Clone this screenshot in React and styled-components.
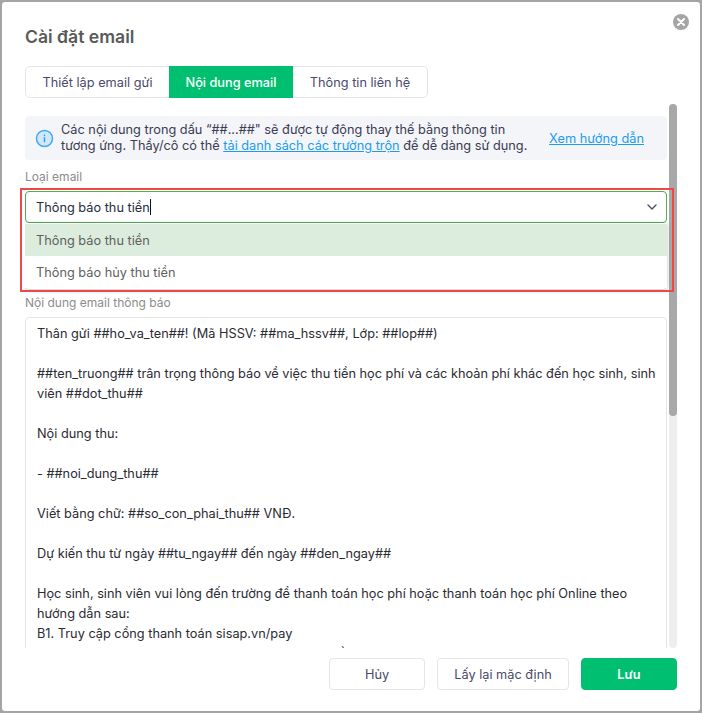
import React from "react";
import styled, { createGlobalStyle } from "styled-components";
import { ChevronDown } from "lucide-react";

const Global = createGlobalStyle`
  html, body { margin: 0; padding: 0; height: 100%; background: #a5a5a5; }
  #root { height: 100%; }
  * { box-sizing: border-box; }
`;

const Page = styled.div`
  height: 713px;
  padding: 2px;
  font-family: Inter, "Noto Sans", sans-serif;
  font-size: 12.75px;
`;

const Modal = styled.div`
  position: relative;
  height: 709px;
  background: #fff;
  border-radius: 3px;
  display: flex;
  flex-direction: column;
  padding: 23px 23px 21px 23px;
  overflow: hidden;
`;

const CloseButton = styled.button`
  position: absolute;
  top: 12px;
  right: 11px;
  width: 16px;
  height: 16px;
  padding: 0;
  border: 0;
  background: none;
  display: block;
`;

const Title = styled.h2`
  margin: 0;
  font-size: 17.6px;
  line-height: 24px;
  font-weight: 600;
  color: #595959;
`;

const Tabs = styled.div`
  display: flex;
  align-self: flex-start;
  height: 32px;
  margin-top: 17px;
  border: 1px solid #e5e5e8;
  border-radius: 5px;
`;

const Tab = styled.div`
  display: flex;
  align-items: center;
  justify-content: center;
  width: ${(p) => p.$w}px;
  margin: ${(p) => (p.$active ? "-1px 0" : "0")};
  background: ${(p) => (p.$active ? "#00bf71" : "transparent")};
  color: ${(p) => (p.$active ? "#fff" : "#4a4a68")};
  font-weight: ${(p) => (p.$active ? 500 : 400)};
`;

const ScrollArea = styled.div`
  position: relative;
  flex: 1;
  min-height: 0;
  margin-top: 6px;
  padding-right: 10px;
  overflow: hidden;
`;

const Track = styled.div`
  position: absolute;
  top: 0;
  right: 0;
  bottom: 0;
  width: 8px;
  background: #eeeeee;
  border-radius: 4px;
`;

const Thumb = styled.div`
  width: 8px;
  height: 312px;
  background: #a8a8a8;
  border-radius: 4px;
`;

const Content = styled.div`
  padding-top: 12px;
`;

const Info = styled.div`
  display: flex;
  align-items: center;
  height: 44px;
  background: #f3f5f9;
  border-radius: 4px;
  padding: 0 23px 0 10px;
  color: #3c3c52;
  line-height: 16px;
`;

const InfoText = styled.div`
  flex: 1;
  margin-left: 7px;
`;

const Link = styled.a`
  color: #1b9cf0;
  text-decoration: underline;
`;

const Guide = styled(Link)`
  font-size: 12.8px;
  padding-top: 2px;
`;

const Field = styled.div`
  position: relative;
  margin-top: ${(p) => p.$top}px;
`;

const Label = styled.div`
  font-size: 12px;
  line-height: 16px;
  padding-top: 1px;
  height: 16px;
  color: #8c8c8c;
  margin-bottom: 7px;
`;

const SelectBox = styled.div`
  display: flex;
  align-items: center;
  justify-content: space-between;
  height: 32px;
  padding: 0 6px 0 10px;
  border: 1px solid #4caf50;
  border-radius: 4px;
  color: #1f2d3d;
`;

const Caret = styled.span`
  display: inline-block;
  width: 1px;
  height: 16px;
  background: #111;
  vertical-align: -3px;
`;

const Menu = styled.div`
  position: absolute;
  top: 55px;
  left: 0;
  right: 0;
  padding: 1px 0;
  background: #fff;
  border-radius: 0 0 4px 4px;
  box-shadow: 0 1px 4px rgba(0, 0, 0, 0.25);
  z-index: 2;
`;

const Option = styled.div`
  height: 32px;
  padding: 0 11px;
  display: flex;
  align-items: center;
  color: #5f5f5f;
  background: ${(p) => (p.$selected ? "#dcedde" : "#fff")};
`;

const EmailBody = styled.div`
  height: 735px;
  padding: 6px 8px 6px 11px;
  border: 1px solid #e5e5e5;
  border-radius: 4px;
  line-height: 20px;
  color: #2b2b33;
  white-space: pre-wrap;
  overflow: hidden;
`;

const Footer = styled.div`
  display: flex;
  justify-content: flex-end;
  gap: 12px;
  margin-top: 10px;
`;

const Button = styled.button`
  width: ${(p) => p.$w}px;
  height: 32px;
  padding: 0;
  border-radius: 4px;
  font: inherit;
  font-weight: ${(p) => (p.$primary ? 600 : 400)};
  border: 1px solid ${(p) => (p.$primary ? "#00bf71" : "#e5e5e8")};
  background: ${(p) => (p.$primary ? "#00bf71" : "#fff")};
  color: ${(p) => (p.$primary ? "#fff" : "#4a4a68")};
`;

const Highlight = styled.div`
  position: absolute;
  top: 186px;
  left: 18px;
  width: 654px;
  height: 104px;
  border: 2px solid #f04848;
  pointer-events: none;
  z-index: 3;
`;

const emailText = `Thân gửi ##ho_va_ten##! (Mã HSSV: ##ma_hssv##, Lớp: ##lop##)

##ten_truong## trân trọng thông báo về việc thu tiền học phí và các khoản phí khác đến học sinh, sinh viên ##dot_thu##

Nội dung thu:

- ##noi_dung_thu##

Viết bằng chữ: ##so_con_phai_thu## VNĐ.

Dự kiến thu từ ngày ##tu_ngay## đến ngày ##den_ngay##

Học sinh, sinh viên vui lòng đến trường để thanh toán học phí hoặc thanh toán học phí Online theo hướng dẫn sau:
B1. Truy cập cổng thanh toán sisap.vn/pay
B2. Nhập mã học sinh, sinh viên và chọn đợt thu cần thanh toán học phí`;

const InfoIcon = () => (
  <svg width="19" height="19" viewBox="0 0 19 19">
    <circle cx="9.5" cy="9.5" r="8" fill="#cfe8fc" stroke="#3fa9f5" strokeWidth="1.5" />
    <rect x="8.8" y="8.2" width="1.4" height="5" fill="#2f9bef" />
    <rect x="8.8" y="5.6" width="1.4" height="1.5" fill="#2f9bef" />
  </svg>
);

const CloseIcon = () => (
  <svg width="16" height="16" viewBox="0 0 16 16">
    <circle cx="8" cy="8" r="8" fill="#a5a5a5" />
    <path d="M5 5l6 6M11 5l-6 6" stroke="#fff" strokeWidth="2" strokeLinecap="round" />
  </svg>
);

export default function App() {
  return (
    <Page>
      <Global />
      <Modal>
        <CloseButton aria-label="Đóng"><CloseIcon /></CloseButton>
        <Title>Cài đặt email</Title>
        <Tabs>
          <Tab $w={143}>Thiết lập email gửi</Tab>
          <Tab $w={124} $active>Nội dung email</Tab>
          <Tab $w={134}>Thông tin liên hệ</Tab>
        </Tabs>
        <ScrollArea>
          <Content>
            <Info>
              <InfoIcon />
              <InfoText>
                Các nội dung trong dấu “##...##" sẽ được tự động thay thế bằng thông tin
                <br />
                tương ứng. Thầy/cô có thể <Link>tải danh sách các trường trộn</Link> để dễ dàng sử dụng.
              </InfoText>
              <Guide>Xem hướng dẫn</Guide>
            </Info>
            <Field $top={8}>
              <Label>Loại email</Label>
              <SelectBox>
                <span>Thông báo thu tiền<Caret /></span>
                <ChevronDown size={16} color="#4a4a68" strokeWidth={2} />
              </SelectBox>
              <Menu>
                <Option $selected>Thông báo thu tiền</Option>
                <Option>Thông báo hủy thu tiền</Option>
              </Menu>
            </Field>
            <Field $top={71}>
              <Label>Nội dung email thông báo</Label>
              <EmailBody>{emailText}</EmailBody>
            </Field>
          </Content>
          <Track><Thumb /></Track>
        </ScrollArea>
        <Footer>
          <Button $w={96}>Hủy</Button>
          <Button $w={132}>Lấy lại mặc định</Button>
          <Button $w={96} $primary>Lưu</Button>
        </Footer>
        <Highlight />
      </Modal>
    </Page>
  );
}
